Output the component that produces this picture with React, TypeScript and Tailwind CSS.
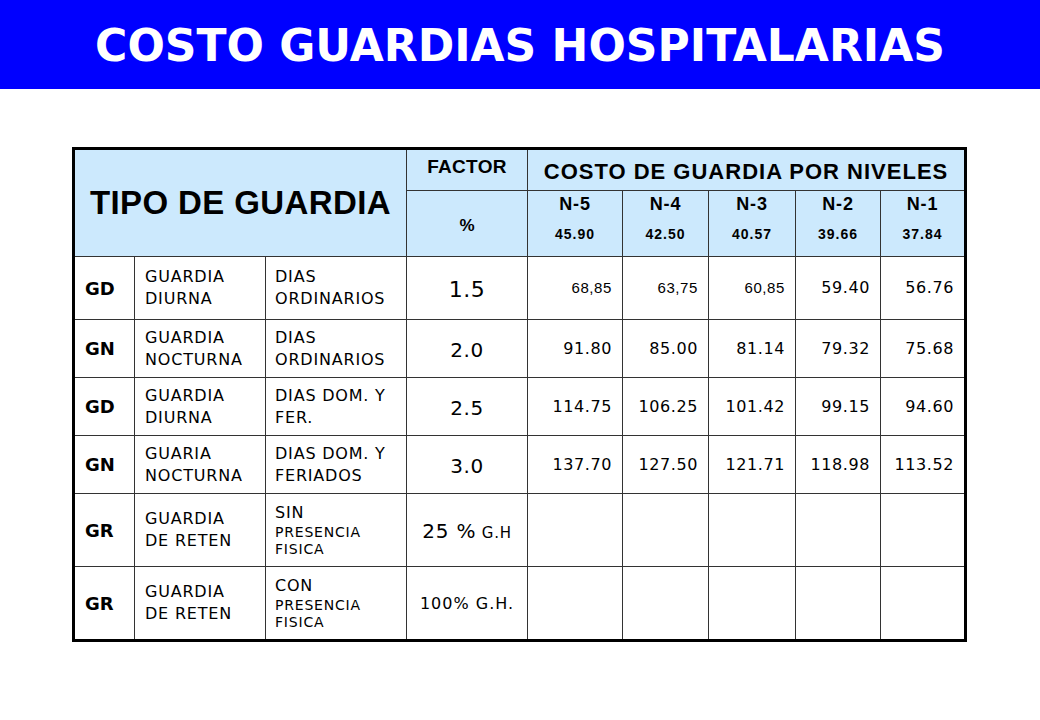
import React from "react";

const V = "[font-family:'DejaVu_Sans',Verdana,sans-serif]";
const A = "[font-family:'Liberation_Sans',Arial,sans-serif]";

type Val = [string, "a" | "v"];
type Row = {
  code: string;
  tipo: string[];
  dias: React.ReactNode;
  factor: React.ReactNode;
  vals: Val[];
};

const small = (t: string) => (
  <div className="text-[14px] leading-[17px] tracking-[0.8px]">{t}</div>
);

const rows: Row[] = [
  {
    code: "GD",
    tipo: ["GUARDIA", "DIURNA"],
    dias: (
      <div className="text-[16px] leading-[22px] tracking-[0.8px]">
        DIAS
        <br />
        ORDINARIOS
      </div>
    ),
    factor: <span className="text-[22px] tracking-[0.5px]">1.5</span>,
    vals: [
      ["68,85", "a"],
      ["63,75", "a"],
      ["60,85", "a"],
      ["59.40", "v"],
      ["56.76", "v"],
    ],
  },
  {
    code: "GN",
    tipo: ["GUARDIA", "NOCTURNA"],
    dias: (
      <div className="text-[16px] leading-[22px] tracking-[0.8px]">
        DIAS
        <br />
        ORDINARIOS
      </div>
    ),
    factor: <span className="text-[20px] tracking-[0.5px]">2.0</span>,
    vals: [
      ["91.80", "v"],
      ["85.00", "v"],
      ["81.14", "v"],
      ["79.32", "v"],
      ["75.68", "v"],
    ],
  },
  {
    code: "GD",
    tipo: ["GUARDIA", "DIURNA"],
    dias: (
      <div className="text-[16px] leading-[22px] tracking-[0.8px] whitespace-pre">
        {"DIAS DOM. Y"}
        <br />
        {"FER."}
      </div>
    ),
    factor: <span className="text-[20px] tracking-[0.5px]">2.5</span>,
    vals: [
      ["114.75", "v"],
      ["106.25", "v"],
      ["101.42", "v"],
      ["99.15", "v"],
      ["94.60", "v"],
    ],
  },
  {
    code: "GN",
    tipo: ["GUARIA", "NOCTURNA"],
    dias: (
      <div className="text-[16px] leading-[22px] tracking-[0.8px] whitespace-pre">
        {"DIAS DOM. Y"}
        <br />
        {"FERIADOS"}
      </div>
    ),
    factor: <span className="text-[20px] tracking-[0.5px]">3.0</span>,
    vals: [
      ["137.70", "v"],
      ["127.50", "v"],
      ["121.71", "v"],
      ["118.98", "v"],
      ["113.52", "v"],
    ],
  },
  {
    code: "GR",
    tipo: ["GUARDIA", "DE RETEN"],
    dias: (
      <div>
        <div className="text-[16px] leading-[22px] tracking-[0.8px]">SIN</div>
        {small("PRESENCIA")}
        {small("FISICA")}
      </div>
    ),
    factor: (
      <span className="tracking-[0.8px]">
        <span className="text-[20px]">25 %</span>
        <span className="text-[15px]"> G.H</span>
      </span>
    ),
    vals: [],
  },
  {
    code: "GR",
    tipo: ["GUARDIA", "DE RETEN"],
    dias: (
      <div>
        <div className="text-[16px] leading-[22px] tracking-[0.8px]">CON</div>
        {small("PRESENCIA")}
        {small("FISICA")}
      </div>
    ),
    factor: <span className="text-[16px] tracking-[1px]">100% G.H.</span>,
    vals: [],
  },
];

const levels = [
  ["N-5", "45.90"],
  ["N-4", "42.50"],
  ["N-3", "40.57"],
  ["N-2", "39.66"],
  ["N-1", "37.84"],
];

export default function App() {
  return (
    <div className="w-[1040px] h-[720px] bg-white flex flex-col">
      <div className="h-[89px] bg-[#0000ff] flex items-center justify-center">
        <h1
          className={`${V} text-white font-bold text-[44px] leading-none pt-[2px]`}
        >
          COSTO GUARDIAS HOSPITALARIAS
        </h1>
      </div>

      <div className="mt-[58px] ml-[72px] w-[895px]">
        <div className="border-[3px] border-black bg-[#333333] grid gap-px grid-cols-[59px_130px_140px_120px_94px_85px_86px_84px_83px] grid-rows-[40px_65px_62px_57px_57px_57px_72px_72px] text-black">
          {/* Header row 1 */}
          <div
            className={`${A} col-span-3 row-span-2 bg-[#cce9fd] flex items-center justify-center font-bold text-[33px] tracking-[0.4px]`}
          >
            TIPO DE GUARDIA
          </div>
          <div
            className={`${A} bg-[#cce9fd] flex justify-center pt-[7px] font-bold text-[19px] leading-[19px] tracking-[0.3px]`}
          >
            FACTOR
          </div>
          <div
            className={`${A} col-span-5 bg-[#cce9fd] flex items-center justify-center font-bold text-[22px] tracking-[1px] pt-[2px]`}
          >
            COSTO DE GUARDIA POR NIVELES
          </div>

          {/* Header row 2 */}
          <div
            className={`${A} bg-[#cce9fd] flex items-center justify-center font-bold text-[17px] pt-[4px]`}
          >
            %
          </div>
          {levels.map(([n, v]) => (
            <div
              key={n}
              className={`${A} bg-[#cce9fd] flex flex-col items-center pt-[4px] font-bold`}
            >
              <div className="text-[18px] leading-[18px] tracking-[0.8px]">{n}</div>
              <div className="text-[14px] leading-[14px] tracking-[1px] mt-[14px]">
                {v}
              </div>
            </div>
          ))}

          {/* Data rows */}
          {rows.map((r, i) => (
            <React.Fragment key={i}>
              <div
                className={`${V} bg-white flex items-center pl-[10px] font-bold text-[18px]`}
              >
                {r.code}
              </div>
              <div
                className={`${V} bg-white flex items-center pl-[10px] text-[16px] leading-[22px] tracking-[0.8px]`}
              >
                <div>
                  {r.tipo[0]}
                  <br />
                  {r.tipo[1]}
                </div>
              </div>
              <div className={`${V} bg-white flex items-center pl-[9px]`}>
                {r.dias}
              </div>
              <div
                className={`${V} bg-white flex items-center justify-center pt-[2px]`}
              >
                {r.factor}
              </div>
              {r.vals.length > 0
                ? r.vals.map(([t, f], j) => (
                    <div
                      key={j}
                      className={`bg-white flex items-center justify-end pr-[10px] ${
                        f === "a"
                          ? `${A} text-[15px] tracking-[0.6px]`
                          : `${V} text-[16px] tracking-[0.6px]`
                      }`}
                    >
                      {t}
                    </div>
                  ))
                : [0, 1, 2, 3, 4].map((j) => (
                    <div key={j} className="bg-white" />
                  ))}
            </React.Fragment>
          ))}
        </div>
      </div>
    </div>
  );
}
